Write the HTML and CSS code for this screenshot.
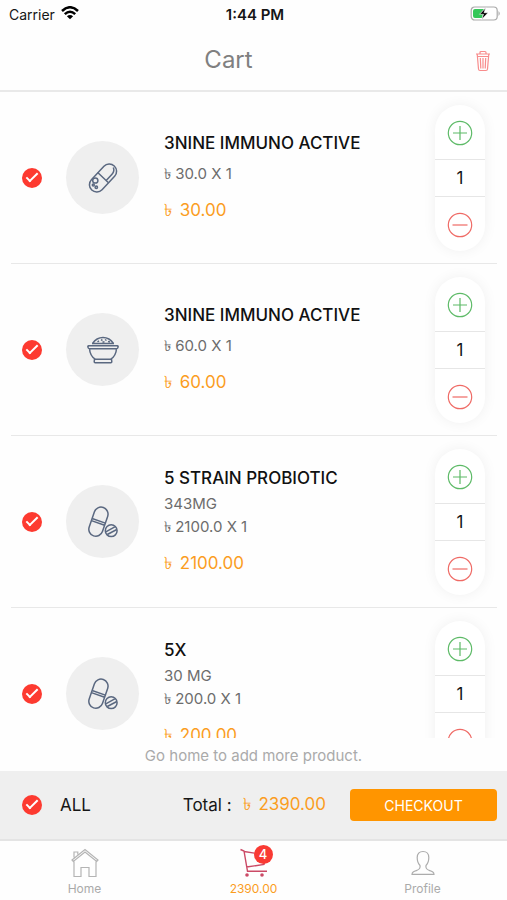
FILE: index.html
```html
<!DOCTYPE html>
<html lang="en">
<head>
<meta charset="utf-8">
<meta name="viewport" content="width=device-width, initial-scale=1">
<title>Cart</title>
<link rel="stylesheet" href="styles.css">
</head>
<body>
<svg class="defs" aria-hidden="true">
  <symbol id="plus" viewBox="0 0 26 26"><circle cx="13" cy="13" r="11.7"/><path d="M13 6v14M6 13h14"/></symbol>
  <symbol id="minus" viewBox="0 0 26 26"><circle cx="13" cy="13" r="11.7"/><path d="M5.500 13h15"/></symbol>
  <symbol id="pills" viewBox="0 0 32 32">
    <g transform="rotate(19 11.500 15.500)"><rect x="4.500" y="0.700" width="14" height="30" rx="7"/><path d="M4.500 14.800h14M4.500 17h14"/></g>
    <circle cx="24.200" cy="24.700" r="5.900"/><path d="M18.800 25.800l9-5M20.300 28.500l9.500-5"/>
  </symbol>
</svg>
<div class="app">
  <div class="status">
    <div class="carrier">Carrier
      <svg width="18" height="14" viewBox="0 0 18 14" fill="none" stroke="#000" stroke-width="2.500"><path d="M1 5Q9-2.500 17 5M3.800 8.200Q9 3.200 14.200 8.200"/><path d="M9 13.300L5.900 10.200Q9 7.600 12.100 10.200Z" fill="#000" stroke="none"/></svg>
    </div>
    <div class="time">1:44 PM</div>
    <svg class="battery" width="31" height="15" viewBox="0 0 31 15"><rect x="1.200" y="1" width="26" height="13" rx="3.500" fill="#fff" stroke="#aaa" stroke-width="1.200"/><path d="M28.500 5q2.500 2.500 0 5z" fill="#aaa"/><path d="M5 3h9l-4 5h3l-1 4H5q-2 0-2-2V5q0-2 2-2z" fill="#35c759"/><path d="M15.800 1.800L9.500 8.300h4l-1.800 5.200 6.300-6.800h-4z" fill="#000" stroke="#fff" stroke-width=".6"/></svg>
  </div>
  <header class="header">
    <h1>Cart</h1>
    <button class="trash" aria-label="Empty cart"><svg width="16" height="22" viewBox="0 0 16 22" fill="none" stroke="#f88c8c" stroke-width="1.200"><path d="M1 4h14M5 4V2.500Q5 1.500 6 1.500h4q1 0 1 1V4M2 6.500h12M2.200 4l1.300 15q.1 1.500 1.500 1.500h6q1.400 0 1.500-1.500l1.300-15M5.300 8l.5 10.500M8 8v10.500M10.700 8l-.5 10.500"/></svg></button>
  </header>
  <main class="list">
    <article class="item">
      <input class="check" type="checkbox" checked aria-label="Select 3NINE IMMUNO ACTIVE, 30.00">
      <div class="thumb"><svg width="32" height="32" viewBox="0 0 32 32"><rect x="8.700" y="-0.500" width="14.600" height="33" rx="7.300" transform="rotate(43 16 16)"/><path d="M10.700 10.500l10.500 10M26.300 5.500q1.600 3.500-1.300 6.700l-5.800 6.300"/><circle cx="8.300" cy="18.500" r="2.600"/><circle cx="6.300" cy="23" r="1"/><circle cx="9.300" cy="25.300" r="1.200"/></svg></div>
      <div class="info"><h2>3NINE IMMUNO ACTIVE</h2><p class="unit">৳ 30.0 X 1</p><p class="sum"><span class="taka">৳</span> 30.00</p></div>
      <div class="stepper"><button class="inc" aria-label="Increase"><svg><use href="#plus"/></svg></button><output>1</output><button class="dec" aria-label="Decrease"><svg><use href="#minus"/></svg></button></div>
    </article>
    <article class="item">
      <input class="check" type="checkbox" checked aria-label="Select 3NINE IMMUNO ACTIVE, 60.00">
      <div class="thumb"><svg width="32" height="32" viewBox="0 0 32 32"><path d="M1.500 11.800h29q.8 0 .6 1l-.4 1.200q-.3.700-1.200.7h-27q-.9 0-1.200-.7l-.4-1.200q-.2-1 .6-1zM2.500 14.700q.5 7 5.700 10.500h15.600q5.200-3.500 5.700-10.500M7.500 25.200l-.3 2.600q0 1 1 1h15.600q1 0 1-1l-.3-2.600M5 9.500h22M5.500 9.500Q9.500 3.500 16 3.500t10.500 6"/><path d="M10.500 7.800l1.500-1M14 5.700l1.500.8M18 5.500l1.500 1M15.500 8.300l2-.5M21 7.600l2 .5"/></svg></div>
      <div class="info"><h2>3NINE IMMUNO ACTIVE</h2><p class="unit">৳ 60.0 X 1</p><p class="sum"><span class="taka">৳</span> 60.00</p></div>
      <div class="stepper"><button class="inc" aria-label="Increase"><svg><use href="#plus"/></svg></button><output>1</output><button class="dec" aria-label="Decrease"><svg><use href="#minus"/></svg></button></div>
    </article>
    <article class="item">
      <input class="check" type="checkbox" checked aria-label="Select 5 STRAIN PROBIOTIC">
      <div class="thumb"><svg width="32" height="32"><use href="#pills"/></svg></div>
      <div class="info"><h2>5 STRAIN PROBIOTIC</h2><p class="dose">343MG</p><p class="unit">৳ 2100.0 X 1</p><p class="sum"><span class="taka">৳</span> 2100.00</p></div>
      <div class="stepper"><button class="inc" aria-label="Increase"><svg><use href="#plus"/></svg></button><output>1</output><button class="dec" aria-label="Decrease"><svg><use href="#minus"/></svg></button></div>
    </article>
    <article class="item">
      <input class="check" type="checkbox" checked aria-label="Select 5X">
      <div class="thumb"><svg width="32" height="32"><use href="#pills"/></svg></div>
      <div class="info"><h2>5X</h2><p class="dose">30 MG</p><p class="unit">৳ 200.0 X 1</p><p class="sum"><span class="taka">৳</span> 200.00</p></div>
      <div class="stepper"><button class="inc" aria-label="Increase"><svg><use href="#plus"/></svg></button><output>1</output><button class="dec" aria-label="Decrease"><svg><use href="#minus"/></svg></button></div>
    </article>
  </main>
  <p class="hint">Go home to add more product.</p>
  <section class="summary">
    <label class="all"><input class="check" type="checkbox" checked>ALL</label>
    <div class="total"><span>Total :</span><span class="amount"><span class="taka">৳</span> 2390.00</span></div>
    <button class="checkout">CHECKOUT</button>
  </section>
  <nav class="tabs">
    <a href="#home"><svg width="28" height="30" viewBox="0 0 28 30" fill="none" stroke="#b4b4b4" stroke-width="1.200"><path d="M1 12L14 1.500 27 12l-1.300 1.500L14 4 2.300 13.500zM3 9.500V4h3.800v2.500M3 13.500v15h7V19.500h8v9h7v-15"/></svg>Home</a>
    <a class="active" href="#cart"><span class="cart"><svg width="28" height="30" viewBox="0 0 28 30" fill="none" stroke="#cb4a66" stroke-width="1.400"><path d="M.5 1.500L4 3l3.500 20.300H27M4 3.500L26 7l-2 9.500L6.500 19"/><circle cx="7" cy="27" r="1.800" fill="#cb4a66" stroke="none"/><circle cx="22" cy="27" r="1.800" fill="#cb4a66" stroke="none"/></svg><b class="badge">4</b></span>2390.00</a>
    <a href="#profile"><svg width="28" height="30" viewBox="0 0 28 30" fill="none" stroke="#acacac" stroke-width="1.200"><path d="M14 3.500c-3.800 0-5.800 2.500-5.800 6 0 4 1.300 6.500 2.800 8 .6 2.800-.2 3.800-3 4.800C4.500 23.500 3 24 3 26.400h22c0-2.400-1.500-2.900-5-4.100-2.800-1-3.600-2-3-4.800 1.500-1.500 2.800-4 2.800-8 0-3.500-2-6-5.800-6z"/></svg>Profile</a>
  </nav>
</div>
</body>
</html>
```
FILE: styles.css
```css
* { box-sizing: border-box; }
body { margin: 0; background: #fefefe; color: #161616; font-family: Inter, "Liberation Sans", sans-serif; }
h1, h2, p { margin: 0; font-weight: 400; }
button { border: 0; padding: 0; background: none; font: inherit; cursor: pointer; }
a { color: inherit; text-decoration: none; }
.defs { position: absolute; width: 0; height: 0; }
.app { height: 100vh; display: flex; flex-direction: column; }

.status { height: 28px; padding: 0 6px 0 9px; display: grid; grid-template-columns: 1fr auto 1fr; align-items: center; font-size: 14px; }
.carrier { display: flex; align-items: center; gap: 6px; }
.carrier svg { margin-bottom: 2px; }
.time { font-size: 15px; font-weight: 600; }
.battery { justify-self: end; margin-bottom: 2px; }

.header { height: 64px; padding: 0 16px; display: grid; grid-template-columns: 1fr auto 1fr; align-items: center; border-bottom: 2px solid #e9e9e9; }
.header h1 { grid-column: 2; margin-right: 50px; font-size: 24px; line-height: 28px; padding-top: 2px; color: #808080; }
.trash { justify-self: end; height: 22px; margin-top: 4px; }
.trash svg { display: block; }

.list { flex: 1; min-height: 0; overflow: hidden; padding: 0 10px 0 11px; }
.item { height: 172px; padding: 0 12px 0 11px; display: flex; align-items: center; border-bottom: 1px solid #e8e8e8; }

.check { appearance: none; flex: none; display: grid; place-items: center; width: 20px; height: 20px; margin: 0; border-radius: 50%; background: #fd3a30; }
.check:checked::before { content: ""; width: 10px; height: 4px; margin-bottom: 4px; border: solid #fff; border-width: 0 0 2px 2px; rotate: -45deg; }

.thumb { flex: none; display: grid; place-items: center; width: 73px; height: 73px; margin: 0 25px 0 24px; border-radius: 50%; background: #efefef; }
.thumb svg { fill: none; stroke: #5a6880; stroke-width: 1.500; }

.info { flex: 1; min-width: 0; padding-bottom: 2px; }
.info h2 { font-size: 17px; line-height: 24px; font-weight: 500; color: #111; }
.dose, .unit { font-size: 15px; line-height: 20px; color: #6c6c6c; }
.dose { margin-top: 4px; }
.unit { margin-top: 9px; }
.dose + .unit { margin-top: 3px; }
.sum { margin-top: 14px; font-size: 17px; line-height: 24px; color: #fb9d1e; }
.taka { margin-right: 3px; }

.stepper { flex: none; width: 50px; display: flex; flex-direction: column; border-radius: 25px; background: #fff; box-shadow: 0 0 14px rgba(0, 0, 0, .06); }
.stepper button { height: 54px; padding-top: 2px; display: grid; place-items: center; }
.stepper output { height: 38px; line-height: 36px; border: solid #e6e6e6; border-width: 1px 0; text-align: center; font-size: 17px; }
.stepper svg { width: 26px; height: 26px; fill: none; stroke-width: 1.200; }
.inc { stroke: #5dba67; }
.dec { stroke: #ef6a65; }

.hint { height: 33px; padding-top: 8px; text-align: center; font-size: 15px; line-height: 20px; color: #aaa; }

.summary { height: 68px; padding: 0 10px 0 22px; display: flex; align-items: center; background: #efefef; font-size: 17px; }
.all { display: flex; align-items: center; gap: 18px; }
.total { flex: 1; display: flex; align-items: center; justify-content: flex-end; gap: 11px; margin-right: 24px; }
.amount { color: #fb9d1e; }
.checkout { width: 147px; height: 32px; border-radius: 4px; background: #ff9500; color: #fff; font-size: 14px; }

.tabs { height: 61px; padding-top: 7px; display: grid; grid-template-columns: repeat(3, 1fr); border-top: 2px solid #e4e4e4; color: #aaa; font-size: 12px; line-height: 16px; }
.tabs a { display: flex; flex-direction: column; align-items: center; gap: 3px; }
.tabs svg { display: block; }
.tabs .active { color: #fb9d1e; }
.cart { position: relative; }
.badge { position: absolute; top: -3px; right: -5px; width: 19px; height: 19px; border-radius: 50%; background: #f93a33; color: #fff; font-size: 13px; line-height: 19px; font-weight: 500; text-align: center; }
```
